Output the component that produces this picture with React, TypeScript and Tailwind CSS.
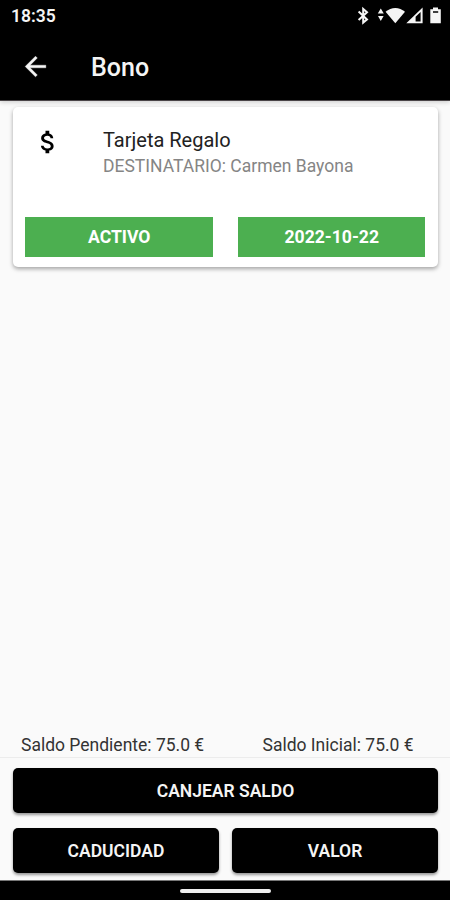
import type { ReactNode } from 'react';

function StatusIcons() {
  return (
    <svg width="90" height="24" viewBox="355 4 90 24" fill="#f5f5f5">
      <path d="M358.6 11.6L367 19.4L363.2 22.6V8.9L367 12.2L358.6 20" fill="none" stroke="#f5f5f5" strokeWidth="2" />
      <path d="M377.8 13.4L380.8 8.6L383.8 13.4ZM378 16L380.8 21L383.6 16Z" />
      <path d="M385.6 11.8C391.3 6.7 399.3 6.7 405 11.8L395.3 23.2Z" />
      <path fillRule="evenodd" d="M406.3 23.2L422.6 7.6V23.2ZM415.6 21.4H420.6V12L415.6 16.8Z" />
      <path fillRule="evenodd" d="M430.3 9.2H433V7.4H438V9.2H440.8V23.3H430.3ZM433 11.2V12.8H438.2V11.2Z" />
    </svg>
  );
}

function Tag({ children }: { children: ReactNode }) {
  return (
    <div className="flex h-10 flex-1 items-center justify-center bg-[#4caf50] pt-px pl-px text-[17.6px] font-bold text-white">
      {children}
    </div>
  );
}

function ActionButton({ children }: { children: ReactNode }) {
  return (
    <button className="flex h-[45px] flex-1 items-center justify-center rounded-[5px] bg-black pt-0.5 text-[17.5px] font-semibold text-[#f5f5f5] shadow-[0_2px_3px_rgba(0,0,0,0.4)]">
      {children}
    </button>
  );
}

export default function App() {
  return (
    <div className="flex h-[900px] w-[450px] flex-col overflow-hidden bg-[#fafafa] font-['Roboto',sans-serif]">
      <header className="z-10 flex h-[101px] flex-col border-b border-[#4a4548] bg-black text-[#f5f5f5] shadow-[0_1px_5px_rgba(0,0,0,0.2)]">
        <div className="flex h-8 items-center justify-between pr-[5px] pl-[11px]">
          <span className="pt-px text-[17.5px] font-semibold">18:35</span>
          <StatusIcons />
        </div>
        <div className="flex h-[68px] items-center pl-5">
          <svg width="31" height="31" viewBox="0 0 24 24" fill="currentColor" stroke="currentColor" strokeWidth="0.3">
            <path d="M20 11H7.83l5.59-5.59L12 4l-8 8 8 8 1.41-1.41L7.83 13H20v-2z" />
          </svg>
          <h1 className="ml-10 pt-[3px] text-[25px] font-medium">Bono</h1>
        </div>
      </header>

      <main className="flex-1 pt-1.5 pr-3 pl-[13px]">
        <section className="h-[160px] rounded-[5px] bg-white shadow-[0_2px_4px_rgba(0,0,0,0.35)]">
          <div className="flex h-[110px] items-start pt-5 pl-5">
            <svg width="30" height="30" viewBox="0 0 24 24" fill="#000">
              <path d="M11.8 10.9c-2.27-.59-3-1.2-3-2.15 0-1.09 1.01-1.85 2.7-1.85 1.78 0 2.44.85 2.5 2.1h2.21c-.07-1.72-1.12-3.3-3.21-3.81V3h-3v2.16c-1.94.42-3.5 1.68-3.5 3.61 0 2.31 1.91 3.46 4.7 4.13 2.5.6 3 1.48 3 2.41 0 .69-.49 1.79-2.7 1.79-2.06 0-2.87-.92-2.98-2.1h-2.2c.12 2.19 1.76 3.42 3.68 3.83V21h3v-2.15c1.95-.37 3.5-1.5 3.5-3.55 0-2.84-2.43-3.81-4.7-4.4z" />
            </svg>
            <div className="ml-10">
              <p className="text-[20px] leading-[26px] text-[#222]">Tarjeta Regalo</p>
              <p className="text-[17.5px] leading-[26px] text-[#858585]">DESTINATARIO: Carmen Bayona</p>
            </div>
          </div>
          <div className="flex gap-[25px] pr-[13px] pl-3">
            <Tag>ACTIVO</Tag>
            <Tag>2022-10-22</Tag>
          </div>
        </section>
      </main>

      <div className="flex h-[26px] items-center border-b border-[#ececec] pt-0.5 text-[17.5px] text-[#333]">
        <span className="w-[241px] pl-[21px]">Saldo Pendiente: 75.0 €</span>
        <span className="pl-[21.5px]">Saldo Inicial: 75.0 €</span>
      </div>

      <footer className="flex h-[122px] flex-col gap-[15px] pt-[10px] pr-3 pl-[13px]">
        <div className="flex">
          <ActionButton>CANJEAR SALDO</ActionButton>
        </div>
        <div className="flex gap-[13px]">
          <ActionButton>CADUCIDAD</ActionButton>
          <ActionButton>VALOR</ActionButton>
        </div>
      </footer>

      <nav className="flex h-5 justify-center border-t border-[#777] bg-black pt-2">
        <div className="h-[4px] w-[91px] rounded-full bg-[#eee]" />
      </nav>
    </div>
  );
}
